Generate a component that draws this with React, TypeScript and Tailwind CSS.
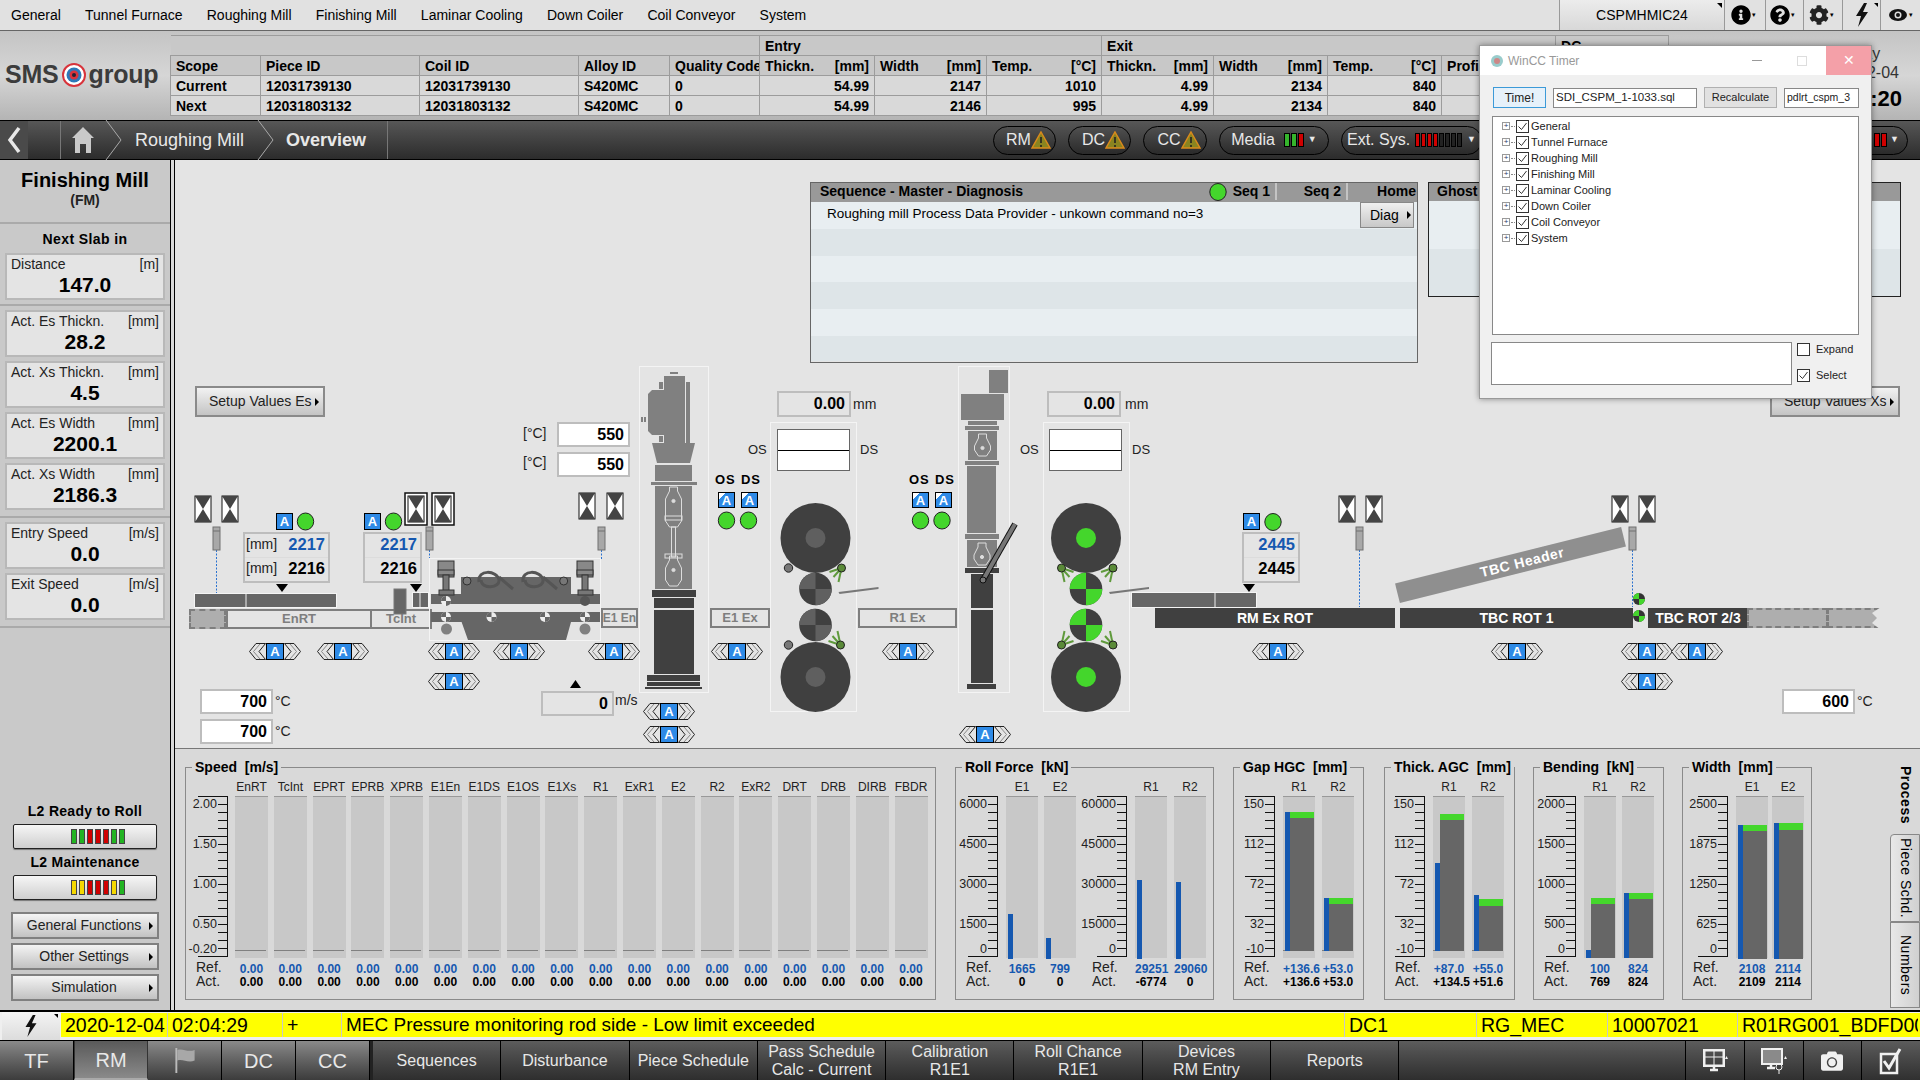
import { FaCamera, FaCog, FaInfoCircle, FaQuestionCircle } from 'react-icons/fa';

const GREEN = '#44d62c';

// ---------- small shared bits ----------

function Arrow() {
  return <span className="ml-auto h-0 w-0 border-y-[4px] border-l-[4px] border-y-transparent border-l-black" />;
}

function Bolt({ className }: { className: string }) {
  return (
    <svg viewBox="0 0 14 24" className={className}>
      <path d="M9 0 L1 13 L6 13 L3 24 L13 9 L8 9 L12 0 Z" fill="#111" />
    </svg>
  );
}

function LedStrip({ colors }: { colors: string[] }) {
  return (
    <div className="flex gap-[2px]">
      {colors.map((c, i) => (
        <span key={i} className="h-[15px] w-[6px] border border-[#444]" style={{ background: c }} />
      ))}
    </div>
  );
}

function Warn() {
  return (
    <svg viewBox="0 0 20 18" className="h-[18px] w-[20px]">
      <path d="M10 1 L19 17 L1 17 Z" fill="#8a8420" stroke="#d98a1c" strokeWidth="1.5" />
      <path d="M10 6 L10 12 M10 14 L10 16" stroke="#222" strokeWidth="1.6" />
    </svg>
  );
}

// ---------- top of the page ----------

function TopMenu() {
  const items = ['General', 'Tunnel Furnace', 'Roughing Mill', 'Finishing Mill', 'Laminar Cooling', 'Down Coiler', 'Coil Conveyor', 'System'];
  return (
    <div className="flex h-[31px] items-center border-b border-[#666] bg-[#e1e1e1] pl-[11px] text-[14px] text-black">
      <div className="flex gap-[24.2px]">
        {items.map((t) => (
          <span key={t}>{t}</span>
        ))}
      </div>
      <div className="relative ml-auto flex h-[30px] w-[166px] items-center justify-center border-x border-[#999] bg-linear-to-b from-[#ececec] to-[#d8d8d8]">
        CSPMHMIC24
        <span className="absolute right-[2px] top-[3px] h-0 w-0 border-l-[5px] border-t-[5px] border-l-transparent border-t-black" />
      </div>
      <div className="flex h-[30px] w-[195px] items-center">
        <div className="flex h-full w-[41px] items-center justify-center gap-[1px] border-r border-[#999] pr-[4px]"><FaInfoCircle className="text-[20px] text-black" /><span className="text-[7px]">▾</span></div>
        <div className="flex h-full w-[38px] items-center justify-center gap-[1px] border-r border-[#999] pr-[4px]"><FaQuestionCircle className="text-[20px] text-black" /><span className="text-[7px]">▾</span></div>
        <div className="flex h-full w-[39px] items-center justify-center gap-[1px] border-r border-[#999] pr-[4px]"><FaCog className="text-[20px] text-[#222]" /><span className="text-[7px]">▾</span></div>
        <div className="relative flex h-full w-[38px] items-center justify-center border-r border-[#999]"><Bolt className="h-[24px] w-[14px]" /><span className="absolute right-[2px] top-[3px] h-0 w-0 border-l-[4px] border-t-[4px] border-l-transparent border-t-black" /></div>
        <div className="flex h-full flex-1 items-center justify-center gap-[1px]">
          <svg viewBox="0 0 20 14" className="h-[14px] w-[20px]"><ellipse cx="10" cy="7" rx="9" ry="6" fill="#111" /><circle cx="10" cy="7" r="3.5" fill="#ddd" /><circle cx="10" cy="7" r="2" fill="#111" /></svg>
          <span className="text-[7px]">▾</span>
        </div>
      </div>
    </div>
  );
}

const cellBase = 'border border-[#9c9c9c] px-[5px] text-left font-bold';

function UnitHead({ label, unit }: { label: string; unit: string }) {
  return (
    <th className={`${cellBase} bg-[#c8c8c8]`}>
      <div className="flex justify-between">
        <span>{label}</span>
        <span>{unit}</span>
      </div>
    </th>
  );
}

function PieceRow({ scope, id, e, x }: { scope: string; id: string; e: string[]; x: string[] }) {
  return (
    <tr className="h-[20px] bg-[#d9d9d9]">
      <td className={cellBase}>{scope}</td>
      <td className={cellBase}>{id}</td>
      <td className={cellBase}>{id}</td>
      <td className={cellBase}>S420MC</td>
      <td className={cellBase}>0</td>
      {[...e, ...x].map((v, i) => (
        <td key={i} className={`${cellBase} text-right`}>{v}</td>
      ))}
      <td className={cellBase} />
      <td className={cellBase} />
    </tr>
  );
}

function HeaderBand() {
  return (
    <div className="flex h-[89px] bg-linear-to-b from-[#c4c4c4] via-[#d6d6d6] to-[#b4b4b4]">
      <div className="flex w-[170px] items-center pb-[2px] pl-[5px] text-[25px] font-bold leading-none tracking-[-0.2px] text-[#3c3c3c]">
        <span>SMS</span>
        <svg viewBox="0 0 24 24" className="mx-[3px] h-[28px] w-[24px] shrink-0">
          <circle cx="12" cy="12" r="11" fill="#fff" stroke="#d8343c" strokeWidth="2" />
          <circle cx="12" cy="12" r="7.5" fill="#2e78b8" />
          <circle cx="12" cy="12" r="4.5" fill="#d8343c" />
          <circle cx="12" cy="12" r="2" fill="#223" />
        </svg>
        <span>group</span>
      </div>
      <div className="pt-[4px]">
        <table className="w-[1498px] table-fixed border-collapse text-[14px] leading-[16px] text-black">
          <colgroup>
            <col className="w-[90px]" />
            <col className="w-[159px]" />
            <col className="w-[159px]" />
            <col className="w-[91px]" />
            <col className="w-[90px]" />
            <col className="w-[115px]" />
            <col className="w-[112px]" />
            <col className="w-[115px]" />
            <col className="w-[112px]" />
            <col className="w-[114px]" />
            <col className="w-[114px]" />
            <col className="w-[114px]" />
            <col className="w-[113px]" />
          </colgroup>
          <thead>
            <tr className="h-[20px] bg-[#c8c8c8]">
              <th colSpan={5} className="border-t border-[#9c9c9c]" />
              <th colSpan={3} className={cellBase}>Entry</th>
              <th colSpan={4} className={cellBase}>Exit</th>
              <th className={cellBase}>DC</th>
            </tr>
            <tr className="h-[20px]">
              <th className={`${cellBase} bg-[#c8c8c8]`}>Scope</th>
              <th className={`${cellBase} bg-[#c8c8c8]`}>Piece ID</th>
              <th className={`${cellBase} bg-[#c8c8c8]`}>Coil ID</th>
              <th className={`${cellBase} bg-[#c8c8c8]`}>Alloy ID</th>
              <th className={`${cellBase} overflow-hidden whitespace-nowrap bg-[#c8c8c8]`}>Quality Code</th>
              <UnitHead label="Thickn." unit="[mm]" />
              <UnitHead label="Width" unit="[mm]" />
              <UnitHead label="Temp." unit="[°C]" />
              <UnitHead label="Thickn." unit="[mm]" />
              <UnitHead label="Width" unit="[mm]" />
              <UnitHead label="Temp." unit="[°C]" />
              <th className={`${cellBase} bg-[#c8c8c8]`}>Profile</th>
              <th className={`${cellBase} bg-[#c8c8c8]`} />
            </tr>
          </thead>
          <tbody>
            <PieceRow scope="Current" id="12031739130" e={['54.99', '2147', '1010']} x={['4.99', '2134', '840']} />
            <PieceRow scope="Next" id="12031803132" e={['54.99', '2146', '995']} x={['4.99', '2134', '840']} />
          </tbody>
        </table>
      </div>
      <div className="ml-auto mr-[12px] flex w-[100px] flex-col items-center pt-[13px] text-[16px] leading-[19px] text-[#333]">
        <span>Friday</span>
        <span>2020-12-04</span>
        <span className="mt-[3px] whitespace-nowrap text-[22px] font-bold leading-[28px] text-black">02:04:20</span>
      </div>
    </div>
  );
}

function Pill({ width, label, children }: { width: string; label: string; children: React.ReactNode }) {
  return (
    <div className={`flex h-[29px] shrink-0 items-center justify-center rounded-full border border-black bg-linear-to-b from-[#505050] to-[#2a2a2a] text-[16px] text-[#e8e8e8] ${width}`}>
      {label && <span>{label}</span>}
      {children}
    </div>
  );
}

function Crumb() {
  return (
    <svg viewBox="0 0 20 40" className="h-[40px] w-[20px]">
      <path d="M2 0 L17 20 L2 40" fill="none" stroke="#aaa" strokeWidth="1" />
    </svg>
  );
}

function NavStrip() {
  const reds = (n: number, dark: number) => [...Array(n).fill('#d00000'), ...Array(dark).fill('#222')];
  return (
    <div className="flex h-[40px] items-center border-y border-black bg-linear-to-b from-[#575757] to-[#2c2c2c] text-[18px] text-[#e8e8e8]">
      <div className="flex h-full w-[28px] items-center justify-center bg-[#4a4a4a]">
        <svg viewBox="0 0 14 28" className="h-[28px] w-[14px]"><path d="M12 2 L3 14 L12 26" fill="none" stroke="#e8e8e8" strokeWidth="3.5" /></svg>
      </div>
      <div className="h-full w-[33px] border-r border-[#777]" />
      <svg viewBox="0 0 24 28" className="ml-[10px] h-[28px] w-[24px]">
        <path d="M12 1 L23 12 L20 12 L20 27 L15 27 L15 18 L9 18 L9 27 L4 27 L4 12 L1 12 Z" fill="#c9c9c9" />
      </svg>
      <div className="ml-[9px]"><Crumb /></div>
      <span className="ml-[11px] w-[112px] whitespace-nowrap pt-[1px]">Roughing Mill</span>
      <div className="ml-[9px]"><Crumb /></div>
      <span className="ml-[10px] pt-[1px] font-bold">Overview</span>
      <div className="ml-[21px] h-full border-r border-[#777]" />
      <div className="ml-auto mr-[12px] flex items-center gap-[12px]">
        <Pill width="w-[63px] pl-[8px]" label="RM"><Warn /></Pill>
        <Pill width="w-[63px] pl-[8px]" label="DC"><Warn /></Pill>
        <Pill width="w-[64px] pl-[8px]" label="CC"><Warn /></Pill>
        <Pill width="w-[110px]" label="Media">
          <div className="ml-[9px] flex gap-[1px]">
            {['#35b52c', '#35b52c', '#d00000'].map((c, i) => <span key={i} className="h-[14px] w-[6px] border border-black" style={{ background: c }} />)}
          </div>
          <span className="ml-[4px] text-[9px]">▼</span>
        </Pill>
        <Pill width="w-[141px]" label="Ext. Sys.">
          <div className="ml-[5px] flex gap-[1px]">
            {reds(4, 4).map((c, i) => <span key={i} className="h-[14px] w-[5px] border border-black" style={{ background: c }} />)}
          </div>
          <span className="ml-[5px] text-[9px]">▼</span>
        </Pill>
        <Pill width="w-[414px]" label="">
          <div className="ml-auto flex gap-[1px]">
            {reds(2, 0).map((c, i) => <span key={i} className="h-[14px] w-[6px] border border-black" style={{ background: c }} />)}
          </div>
          <span className="ml-[3px] mr-[8px] text-[9px]">▼</span>
        </Pill>
      </div>
    </div>
  );
}

// ---------- left column ----------

function ValueCard({ label, unit, value }: { label: string; unit: string; value: string }) {
  return (
    <div className="mx-[5px] flex h-[47px] flex-col border-2 border-[#b8b8b8] bg-[#e4e4e4] px-[4px] text-[14px] leading-[16px] text-[#222]">
      <div className="mt-[1px] flex justify-between">
        <span>{label}</span>
        <span>{unit}</span>
      </div>
      <div className="mt-[2px] text-center text-[21px] font-bold leading-[22px] text-black">{value}</div>
    </div>
  );
}

function SideButton({ label }: { label: string }) {
  return (
    <div className="mx-[11px] flex h-[27px] items-center border-2 border-[#808080] bg-linear-to-b from-[#f4f4f4] to-[#c2c2c2] pl-[6px] pr-[4px] text-[14px] text-[#222]">
      <span className="flex-1 text-center">{label}</span>
      <Arrow />
    </div>
  );
}

function LedButton({ colors }: { colors: string[] }) {
  return (
    <div className="mx-[13px] flex h-[25px] items-center rounded-[2px] border border-[#222] bg-linear-to-b from-[#f6f6f6] to-[#cfcfcf] pl-[57px] shadow-[0_1px_1px_#777]">
      <LedStrip colors={colors} />
    </div>
  );
}

function Sidebar() {
  const g = '#22b422';
  const r = '#d00000';
  const y = '#f5d800';
  return (
    <div className="flex w-[170px] shrink-0 flex-col bg-[#c9c9c9]">
      <div className="pt-[8px] text-center text-[20px] font-bold leading-[24px] text-black">Finishing Mill</div>
      <div className="text-center text-[14px] font-bold leading-[16px] text-[#222]">(FM)</div>
      <div className="mt-[14px] h-[2px] bg-[#aaa]" />
      <div className="mt-[7px] text-center text-[14px] font-bold leading-[16px] tracking-[0.4px] text-black">Next Slab in</div>
      <div className="mt-[6px]"><ValueCard label="Distance" unit="[m]" value="147.0" /></div>
      <div className="mt-[4px] h-[2px] bg-[#aaa]" />
      <div className="mt-[4px] flex flex-col gap-[4px]">
        <ValueCard label="Act. Es Thickn." unit="[mm]" value="28.2" />
        <ValueCard label="Act. Xs Thickn." unit="[mm]" value="4.5" />
        <ValueCard label="Act. Es Width" unit="[mm]" value="2200.1" />
        <ValueCard label="Act. Xs Width" unit="[mm]" value="2186.3" />
      </div>
      <div className="mt-[6px] h-[2px] bg-[#aaa]" />
      <div className="mt-[4px] flex flex-col gap-[4px]">
        <ValueCard label="Entry Speed" unit="[m/s]" value="0.0" />
        <ValueCard label="Exit Speed" unit="[m/s]" value="0.0" />
      </div>
      <div className="mt-[6px] h-[2px] bg-[#aaa]" />
      <div className="mt-auto pb-[9px]">
        <div className="mb-[5px] text-center text-[14px] font-bold leading-[16px] tracking-[0.3px] text-black">L2 Ready to Roll</div>
        <LedButton colors={[g, g, r, r, r, g, g]} />
        <div className="mb-[5px] mt-[5px] text-center text-[14px] font-bold leading-[16px] tracking-[0.3px] text-black">L2 Maintenance</div>
        <LedButton colors={[y, y, r, r, r, y, g]} />
        <div className="mt-[12px] flex flex-col gap-[4px]">
          <SideButton label="General Functions" />
          <SideButton label="Other Settings" />
          <SideButton label="Simulation" />
        </div>
      </div>
    </div>
  );
}

// ---------- mimic diagram drawings ----------

function Hourglass({ x, y, boxed }: { x: number; y: number; boxed?: boolean }) {
  const w = 16;
  const h = 26;
  return (
    <g>
      {boxed && <rect x={x - 3} y={y - 3} width={w + 6} height={h + 6} fill="#fff" stroke="#111" strokeWidth="1.5" />}
      <rect x={x} y={y} width={w} height={h} fill="#fff" stroke="#111" />
      <path d={`M${x} ${y} L${x + w} ${y} L${x + w / 2} ${y + h / 2} Z`} fill="#444" />
      <path d={`M${x} ${y + h} L${x + w} ${y + h} L${x + w / 2} ${y + h / 2} Z`} fill="#444" />
    </g>
  );
}

function Sensor({ x, to }: { x: number; to: number }) {
  return (
    <g>
      <line x1={x + 3.5} y1={550} x2={x + 3.5} y2={to} stroke="#2a72d0" strokeDasharray="2 1.5" />
      <rect x={x} y={527} width={7} height={23} fill="#a8a8a8" stroke="#707070" />
      <line x1={x} y1={531} x2={x + 7} y2={531} stroke="#707070" />
    </g>
  );
}

function Led({ cx, cy }: { cx: number; cy: number }) {
  return <ellipse cx={cx} cy={cy} rx={8.2} ry={8.5} fill={GREEN} stroke="#222" />;
}

function Checker({ cx, cy, r, a, b }: { cx: number; cy: number; r: number; a: string; b: string }) {
  return (
    <g>
      <circle cx={cx} cy={cy} r={r} fill={b} />
      <path d={`M${cx} ${cy} L${cx - r} ${cy} A${r} ${r} 0 0 1 ${cx} ${cy - r} Z`} fill={a} />
      <path d={`M${cx} ${cy} L${cx + r} ${cy} A${r} ${r} 0 0 1 ${cx} ${cy + r} Z`} fill={a} />
    </g>
  );
}

function Sprays({ x, y, dir, up }: { x: number; y: number; dir: number; up: number }) {
  return (
    <g stroke="#5f9a3c" strokeWidth="2">
      <line x1={x} y1={y} x2={x + dir * 12} y2={y + up * 4} />
      <line x1={x} y1={y} x2={x + dir * 8} y2={y + up * 9} />
      <line x1={x} y1={y} x2={x + dir * 3} y2={y + up * 14} />
      <circle cx={x} cy={y} r={4} fill="#5a8a38" stroke="#222" strokeWidth="1" />
    </g>
  );
}

function RollStand({ cx, frameX, on }: { cx: number; frameX: number; on: boolean }) {
  const hub = on ? GREEN : '#5f5f5f';
  const q = on ? GREEN : '#606060';
  return (
    <g>
      <rect x={frameX} y={422.5} width={86} height={289} fill="none" stroke="#f4f4f4" />
      <circle cx={cx} cy={538} r={35} fill="#404040" />
      <circle cx={cx} cy={538} r={10} fill={hub} />
      <circle cx={cx} cy={677} r={35} fill="#404040" />
      <circle cx={cx} cy={677} r={10} fill={hub} />
      <Checker cx={cx} cy={589} r={16.3} a={q} b="#404040" />
      <Checker cx={cx} cy={625} r={16.3} a={q} b="#404040" />
      {on ? (
        <>
          <Sprays x={cx - 24.5} y={568} dir={1} up={1} />
          <Sprays x={cx + 27} y={568} dir={-1} up={1} />
          <Sprays x={cx - 24.5} y={645} dir={1} up={-1} />
          <Sprays x={cx + 27} y={645} dir={-1} up={-1} />
        </>
      ) : (
        <>
          <circle cx={cx - 27} cy={568} r={4.2} fill="#777" stroke="#222" />
          <circle cx={cx - 27} cy={645} r={4.2} fill="#777" stroke="#222" />
          <Sprays x={cx + 26} y={568} dir={-1} up={1} />
          <Sprays x={cx + 25} y={645} dir={-1} up={-1} />
        </>
      )}
      <path d={`M${cx + 23} 592 L${cx + 63} 587 L${cx + 63} 589 L${cx + 24} 594 Z`} fill="#777" />
    </g>
  );
}

function Spindle({ x, y, h }: { x: number; y: number; h: number }) {
  return (
    <g fill="none" stroke="#ddd" strokeWidth="1">
      <path d={`M${x - 4} ${y} L${x + 4} ${y} L${x + 4} ${y + 4} L${x + 8} ${y + 12} L${x + 8} ${y + h - 6} L${x + 4} ${y + h} L${x - 4} ${y + h} L${x - 8} ${y + h - 6} L${x - 8} ${y + 12} L${x - 4} ${y + 4} Z`} />
      <circle cx={x} cy={y + 14} r={1.6} fill="#ddd" />
    </g>
  );
}

function MimicDrawing() {
  const g = '#808080';
  const d = '#404040';
  const frame = { fill: 'none', stroke: '#f4f4f4', strokeWidth: 1 };
  return (
    <svg viewBox="175 160 1745 588" className="absolute left-0 top-0 h-[588px] w-[1745px]">
      <Hourglass x={195} y={496} />
      <Hourglass x={222} y={496} />
      <Hourglass x={408} y={496} boxed />
      <Hourglass x={435} y={496} boxed />
      <Hourglass x={579} y={493} />
      <Hourglass x={607} y={493} />
      <Hourglass x={1339} y={496} />
      <Hourglass x={1366} y={496} />
      <Hourglass x={1612} y={496} />
      <Hourglass x={1639} y={496} />

      <Sensor x={213} to={593} />
      <Sensor x={426} to={560} />
      <Sensor x={598} to={560} />
      <Sensor x={1356} to={607} />
      <Sensor x={1629} to={607} />

      <Led cx={305.5} cy={521.5} />
      <Led cx={393.5} cy={521.5} />
      <Led cx={1273} cy={522} />
      <Led cx={726.5} cy={520.5} />
      <Led cx={748.5} cy={520.5} />
      <Led cx={920.5} cy={520.5} />
      <Led cx={942} cy={520.5} />
      <Led cx={1218} cy={192} />

      {/* pointers above the width boxes */}
      <path d="M276 584 L288 584 L282 592 Z" fill="#000" />
      <path d="M410 584 L422 584 L416 592 Z" fill="#000" />
      <path d="M1243 584 L1255 584 L1249 592 Z" fill="#000" />
      <path d="M570 688 L581 688 L575.5 680 Z" fill="#000" />

      {/* slabs */}
      <rect x={194.5} y={593.5} width={142} height={14} fill="#666" stroke="#f4f4f4" />
      <rect x={245} y={594} width={2} height={13} fill="#aaa" />
      <rect x={394} y={589} width={12} height={25} fill="#666" stroke="#777" />
      <rect x={412.5} y={592.5} width={16} height={15} fill="#666" stroke="#f4f4f4" />
      <rect x={419} y={593} width={2} height={14} fill="#aaa" />
      <rect x={1131.5} y={592.5} width={125} height={15} fill="#666" stroke="#f4f4f4" />
      <rect x={1214} y={593} width={2} height={14} fill="#aaa" />

      {/* torn end of the last roller table */}
      <path d="M1881 607 L1872 613 L1877 618 L1872 623 L1881 630 Z" fill="#e4e4e4" />

      {/* edger entry machine */}
      <rect x={429.5} y={558.5} width={171} height={82} fill="#e4e4e4" {...frame} />
      <path d="M431 594 L461 594 L461 577 L571 577 L571 594 L600 594 L600 604 L431 604 Z" fill="#666" />
      <path d="M431 612 L600 612 L600 622 L571 622 L566 640 L468 640 L461.6 622 L431 622 Z" fill="#666" />
      <path d="M479 582 C477 569 497 570 499 580 C500 588 482 590 481 580 M499 577 L513 589" fill="none" stroke="#555" strokeWidth="3" />
      <path d="M523 582 C521 569 541 570 543 580 C544 588 526 590 525 580 M543 577 L557 589" fill="none" stroke="#555" strokeWidth="3" />
      <circle cx={467} cy={581} r={4} fill="#777" stroke="#333" />
      <circle cx={563.7} cy={581} r={4} fill="#777" stroke="#333" />
      {[438, 577].map((x) => (
        <g key={x}>
          <rect x={x} y={561} width={16} height={16} fill="#888" stroke="#333" />
          <rect x={x} y={570} width={16} height={5} fill="#888" stroke="#333" />
          <rect x={x + 5} y={575} width={6} height={18} fill="#777" stroke="#333" />
          <rect x={x + 1} y={590} width={15} height={5} fill="#777" stroke="#333" />
        </g>
      ))}
      <Checker cx={446} cy={601} r={5} a="#666" b="#ededed" />
      <circle cx={585} cy={601} r={5} fill="#555" />
      <Checker cx={446} cy={617} r={5} a="#666" b="#ededed" />
      <Checker cx={491.5} cy={617} r={5} a="#666" b="#ededed" />
      <Checker cx={545} cy={617} r={5} a="#666" b="#ededed" />
      <Checker cx={585} cy={617} r={5} a="#666" b="#ededed" />
      <circle cx={446.5} cy={629} r={5.5} fill="#808080" />
      <circle cx={585} cy={629} r={5.5} fill="#808080" />

      {/* E1 stand */}
      <rect x={639.5} y={366.5} width={69} height={326} fill="#e4e4e4" {...frame} />
      <rect x={670} y={372} width={8} height={2} fill={g} />
      <rect x={664} y={376} width={21} height={67} fill={g} />
      <rect x={686} y={382} width={4} height={61} fill={g} />
      <path d="M652 390 L664 390 L664 435 L652 435 L648 431 L648 394 Z" fill={g} />
      <rect x={659} y={382} width={4} height={7} fill={g} />
      <rect x={659} y={436} width={4} height={6} fill={g} />
      <rect x={641} y={417} width={2} height={5} fill={g} />
      <rect x={644} y={417} width={2} height={5} fill={g} />
      <path d="M652 443 L695 443 L690 463 L657 463 Z" fill={g} />
      <rect x={655} y={465} width={37} height={16} fill={g} />
      <rect x={651} y={482} width={46} height={3} fill={g} />
      <rect x={655} y={486} width={37} height={103} fill={g} />
      <Spindle x={673.5} y={487} h={40} />
      <rect x={671.5} y={527} width={4} height={30} fill="none" stroke="#ddd" />
      <rect x={665} y={516} width={17} height={4} fill="none" stroke="#ddd" />
      <rect x={665} y={554} width={17} height={4} fill="none" stroke="#ddd" />
      <Spindle x={673.5} y={556} h={30} />
      <rect x={652} y={590} width={44} height={7} fill={d} />
      <rect x={654} y={598} width={40} height={10} fill={d} />
      <rect x={654} y={610} width={40} height={64} fill={d} />
      <rect x={647} y={675} width={53} height={6} fill={d} />
      <rect x={647} y={682} width={53} height={4} fill={d} />
      <rect x={645} y={687} width={57} height={2} fill={d} />

      {/* R1 stand */}
      <rect x={958.5} y={366.5} width={51} height={326} fill="#e4e4e4" {...frame} />
      <rect x={989} y={370} width={19} height={23} fill={g} />
      <rect x={961} y={394} width={43} height={26} fill={g} />
      <rect x={968} y={421} width={29} height={4} fill={g} />
      <rect x={965} y={426} width={34} height={4} fill={g} />
      <rect x={968} y={431} width={29} height={29} fill={g} />
      <Spindle x={982.5} y={434} h={22} />
      <rect x={965} y={461} width={34} height={4} fill={g} />
      <rect x={967} y={466} width={29} height={67} fill={g} />
      <rect x={965} y={534} width={34} height={5} fill={g} />
      <rect x={967} y={540} width={30} height={27} fill={g} />
      <Spindle x={982} y={543} h={22} />
      <rect x={965} y={568} width={34} height={5} fill={d} />
      <rect x={971} y={574} width={22} height={34} fill={d} />
      <rect x={971} y={610} width={22} height={73} fill={d} />
      <rect x={967} y={684} width={29} height={5} fill={d} />
      <line x1={983} y1={580} x2={1015} y2={524} stroke="#111" strokeWidth="6" />
      <line x1={983} y1={580} x2={1015} y2={524} stroke="#777" strokeWidth="4" />
      <circle cx={983} cy={580} r={3} fill="#777" stroke="#111" />

      <RollStand cx={815.5} frameX={770.5} on={false} />
      <RollStand cx={1086} frameX={1043.5} on />

      <Checker cx={1639} cy={599} r={6} a={GREEN} b="#333" />
      <Checker cx={1639} cy={616} r={6} a={GREEN} b="#333" />
    </svg>
  );
}

function AutoCtl({ pos }: { pos: string }) {
  return (
    <div className={`absolute flex h-[17px] w-[52px] items-center ${pos}`}>
      <svg viewBox="0 0 17 17" className="h-[17px] w-[17px]">
        <path d="M7 0.5 L16.5 0.5 L10 8.5 L16.5 16.5 L7 16.5 L0.5 8.5 Z" fill="#e4e4e4" stroke="#222" />
        <path d="M11 1 L4.5 8.5 L11 16" fill="none" stroke="#888" />
      </svg>
      <AutoBox size="h-[17px] w-[18px]" />
      <svg viewBox="0 0 17 17" className="h-[17px] w-[17px]">
        <path d="M10 0.5 L0.5 0.5 L7 8.5 L0.5 16.5 L10 16.5 L16.5 8.5 Z" fill="#e4e4e4" stroke="#222" />
        <path d="M6 1 L12.5 8.5 L6 16" fill="none" stroke="#888" />
      </svg>
    </div>
  );
}

function AutoBox({ size, className = '' }: { size: string; className?: string }) {
  return (
    <span className={`flex shrink-0 items-center justify-center border border-black bg-[#2e8ae6] text-[13px] font-bold leading-none text-white ${size} ${className}`}>A</span>
  );
}

function NumBox({ pos, value, plain }: { pos: string; value: string; plain?: boolean }) {
  return (
    <div className={`absolute flex items-center justify-end border-2 border-[#bdbdbd] pr-[4px] text-[16px] font-bold text-black ${plain ? 'bg-[#e4e4e4]' : 'bg-white'} ${pos}`}>{value}</div>
  );
}

function Tag({ pos, children }: { pos: string; children: React.ReactNode }) {
  return <span className={`absolute whitespace-nowrap text-[14px] leading-[16px] text-[#222] ${pos}`}>{children}</span>;
}

function Segment({ pos, label, dark }: { pos: string; label?: string; dark?: boolean }) {
  return dark ? (
    <div className={`absolute flex h-[20px] items-center justify-center whitespace-nowrap bg-[#404040] text-[14px] font-bold text-white ${pos}`}>{label}</div>
  ) : (
    <div className={`absolute flex h-[20px] items-center justify-center whitespace-nowrap border-2 border-[#7e7e7e] bg-[#e4e4e4] text-[13px] font-bold text-[#7e7e7e] ${pos}`}>{label}</div>
  );
}

function WidthBox({ pos, unit, size }: { pos: string; unit?: boolean; size: string }) {
  return (
    <div className={`absolute flex h-[51px] flex-col border-2 border-[#bdbdbd] bg-[#e4e4e4] leading-[16px] ${size} ${pos}`}>
      {[['2217', 'text-[#1558b0]'], ['2216', 'text-black']].map(([v, c], i) => (
        <div key={i} className={`flex h-[23.5px] items-center justify-end pb-[3px] pr-[3px] ${i === 0 ? 'border-b border-[#dcdcdc]' : ''}`}>
          {unit && <span className="mr-auto pl-[1px] text-[14px] text-[#222]">[mm]</span>}
          <span className={`text-[16.5px] font-bold ${c}`}>{v}</span>
        </div>
      ))}
    </div>
  );
}

function GapGauge({ pos }: { pos: string }) {
  return (
    <div className={`absolute flex h-[42px] w-[73px] flex-col border border-[#666] bg-white ${pos}`}>
      <div className="flex-1 border-b border-black" />
      <div className="flex-1" />
    </div>
  );
}

function DiagPanels() {
  const rows = ['bg-[#e8eef1]', 'bg-[#dee5e8]', 'bg-[#e8eef1]', 'bg-[#dee5e8]', 'bg-[#e8eef1]', 'bg-[#dee5e8]'];
  return (
    <div className="flex gap-[10px] pl-[635px] pt-[22px] text-black">
      <div className="h-[181px] w-[608px] border border-[#666]">
        <div className="flex h-[19px] items-center bg-[#999] pb-[2px] text-[14px] font-bold">
          <span className="ml-[9px]">Sequence - Master - Diagnosis</span>
          <span className="ml-auto mr-[5px]">Seq 1</span>
          <span className="flex h-full w-[71px] items-center justify-end border-l-2 border-[#c4c4c4] pr-[5px]">Seq 2</span>
          <span className="flex h-full w-[71px] items-center justify-end border-l-2 border-[#c4c4c4] pr-[1px]">Home</span>
        </div>
        {rows.map((bg, i) => (
          <div key={i} className={`flex h-[26.8px] items-center last:h-[25px] ${bg}`}>
            {i === 0 && (
              <>
                <span className="mb-[2px] ml-[16px] text-[13.5px]">Roughing mill Process Data Provider - unkown command no=3</span>
                <span className="ml-auto mr-[3px] flex h-[26px] w-[54px] items-center border border-[#888] bg-linear-to-b from-[#f0f0f0] to-[#c8c8c8] pl-[9px] pr-[2px] text-[14px]">Diag<Arrow /></span>
              </>
            )}
          </div>
        ))}
      </div>
      <div className="h-[115px] w-[473px] border border-[#222]">
        <div className="flex h-[18px] items-center bg-[#999] pb-[2px] pl-[8px] text-[14px] font-bold">Ghost</div>
        <div className="h-[48px] bg-[#e8eef1]" />
        <div className="h-[47px] bg-[#dee5e8]" />
      </div>
    </div>
  );
}

function Mimic() {
  return (
    <div className="relative h-[588px] bg-[#e4e4e4]">
      <DiagPanels />

      <Segment pos="left-[14px] top-[449px] w-[37px] !border-dashed !bg-[#aeaeae]" />
      <Segment pos="left-[51px] top-[449px] w-[146px]" label="EnRT" />
      <Segment pos="left-[195px] top-[449px] w-[62px]" label="TcInt" />
      <Segment pos="left-[426px] top-[448px] w-[37px] !text-[12px]" label="E1 En" />
      <Segment pos="left-[535px] top-[448px] w-[60px]" label="E1 Ex" />
      <Segment pos="left-[683px] top-[448px] w-[99px]" label="R1 Ex" />
      <Segment dark pos="left-[980px] top-[448px] w-[240px]" label="RM Ex ROT" />
      <Segment dark pos="left-[1225px] top-[448px] w-[233px]" label="TBC ROT 1" />
      <Segment dark pos="left-[1473px] top-[448px] w-[100px]" label="TBC ROT 2/3" />
      <Segment pos="left-[1572px] top-[448px] w-[81px] !border-dashed !bg-[#aeaeae]" />
      <Segment pos="left-[1652px] top-[448px] w-[53px] !border-dashed !bg-[#aeaeae]" />

      <MimicDrawing />

      <div className="absolute left-[1219px] top-[395px] flex h-[20px] w-[233px] -rotate-[14deg] items-center justify-center bg-[#8f8f8f] pl-[24px] text-[14px] font-bold tracking-[0.6px] text-white">TBC Header</div>

      <div className="absolute left-[20px] top-[226px] flex h-[31px] w-[130px] items-center border-2 border-[#8a8a8a] bg-linear-to-b from-[#f2f2f2] to-[#c4c4c4] pl-[12px] pr-[4px] text-[14px] text-[#222]">Setup Values Es<Arrow /></div>
      <div className="absolute left-[1595px] top-[226px] flex h-[31px] w-[130px] items-center border-2 border-[#8a8a8a] bg-linear-to-b from-[#f2f2f2] to-[#c4c4c4] pl-[12px] pr-[4px] text-[14px] text-[#222]">Setup Values Xs<Arrow /></div>

      <AutoBox size="h-[17px] w-[17px]" className="absolute left-[101px] top-[353px]" />
      <AutoBox size="h-[17px] w-[17px]" className="absolute left-[189px] top-[353px]" />
      <AutoBox size="h-[17px] w-[17px]" className="absolute left-[1068px] top-[353px]" />
      <AutoBox size="h-[16px] w-[17px]" className="absolute left-[543px] top-[332px] bg-[linear-gradient(135deg,#fff_22%,#2e8ae6_22%)]" />
      <AutoBox size="h-[16px] w-[17px]" className="absolute left-[566px] top-[332px] bg-[linear-gradient(135deg,#fff_22%,#2e8ae6_22%)]" />
      <AutoBox size="h-[16px] w-[17px]" className="absolute left-[737px] top-[332px] bg-[linear-gradient(135deg,#fff_22%,#2e8ae6_22%)]" />
      <AutoBox size="h-[16px] w-[17px]" className="absolute left-[760px] top-[332px] bg-[linear-gradient(135deg,#fff_22%,#2e8ae6_22%)]" />

      <span className="absolute left-[540px] top-[312px] text-[13px] font-bold leading-[16px] tracking-[0.8px]">OS</span>
      <span className="absolute left-[566px] top-[312px] text-[13px] font-bold leading-[16px] tracking-[0.8px]">DS</span>
      <span className="absolute left-[734px] top-[312px] text-[13px] font-bold leading-[16px] tracking-[0.8px]">OS</span>
      <span className="absolute left-[760px] top-[312px] text-[13px] font-bold leading-[16px] tracking-[0.8px]">DS</span>

      <WidthBox pos="left-[68px] top-[372px]" size="w-[87px]" unit />
      <WidthBox pos="left-[188px] top-[372px]" size="w-[59px]" />
      <div className="absolute left-[1067px] top-[372px] flex h-[51px] w-[58px] flex-col border-2 border-[#bdbdbd] bg-[#e4e4e4] text-[16.5px] font-bold leading-[16px]">
        <div className="flex h-[23.5px] items-center justify-end border-b border-[#dcdcdc] pb-[3px] pr-[3px] text-[#1558b0]">2445</div>
        <div className="flex h-[23.5px] items-center justify-end pb-[3px] pr-[3px] text-black">2445</div>
      </div>

      <NumBox pos="left-[382px] top-[262px] h-[25px] w-[73px]" value="550" />
      <NumBox pos="left-[382px] top-[292px] h-[25px] w-[73px]" value="550" />
      <Tag pos="left-[348px] top-[265px]">[°C]</Tag>
      <Tag pos="left-[348px] top-[294px]">[°C]</Tag>
      <NumBox pos="left-[25px] top-[529px] h-[25px] w-[73px]" value="700" />
      <NumBox pos="left-[25px] top-[559px] h-[25px] w-[73px]" value="700" />
      <Tag pos="left-[100px] top-[533px]">°C</Tag>
      <Tag pos="left-[100px] top-[563px]">°C</Tag>
      <NumBox pos="left-[1607px] top-[529px] h-[25px] w-[73px]" value="600" />
      <Tag pos="left-[1682px] top-[533px]">°C</Tag>
      <NumBox plain pos="left-[366px] top-[531px] h-[25px] w-[73px]" value="0" />
      <Tag pos="left-[440px] top-[532px]">m/s</Tag>
      <NumBox plain pos="left-[602px] top-[231px] h-[26px] w-[74px]" value="0.00" />
      <Tag pos="left-[678px] top-[236px]">mm</Tag>
      <NumBox plain pos="left-[872px] top-[231px] h-[26px] w-[74px]" value="0.00" />
      <Tag pos="left-[950px] top-[236px]">mm</Tag>

      <GapGauge pos="left-[602px] top-[269px]" />
      <GapGauge pos="left-[874px] top-[269px]" />
      <span className="absolute left-[573px] top-[282px] text-[13px] leading-[16px] text-[#222]">OS</span>
      <span className="absolute left-[685px] top-[282px] text-[13px] leading-[16px] text-[#222]">DS</span>
      <span className="absolute left-[845px] top-[282px] text-[13px] leading-[16px] text-[#222]">OS</span>
      <span className="absolute left-[957px] top-[282px] text-[13px] leading-[16px] text-[#222]">DS</span>

      <AutoCtl pos="left-[74px] top-[483px]" />
      <AutoCtl pos="left-[142px] top-[483px]" />
      <AutoCtl pos="left-[253px] top-[483px]" />
      <AutoCtl pos="left-[318px] top-[483px]" />
      <AutoCtl pos="left-[413px] top-[483px]" />
      <AutoCtl pos="left-[536px] top-[483px]" />
      <AutoCtl pos="left-[707px] top-[483px]" />
      <AutoCtl pos="left-[1077px] top-[483px]" />
      <AutoCtl pos="left-[1316px] top-[483px]" />
      <AutoCtl pos="left-[1446px] top-[483px]" />
      <AutoCtl pos="left-[1496px] top-[483px]" />
      <AutoCtl pos="left-[253px] top-[513px]" />
      <AutoCtl pos="left-[1446px] top-[513px]" />
      <AutoCtl pos="left-[468px] top-[543px]" />
      <AutoCtl pos="left-[468px] top-[566px]" />
      <AutoCtl pos="left-[784px] top-[566px]" />
    </div>
  );
}

// ---------- bar charts ----------

function Ruler({ width, labels, className = '', labelClass = '' }: { width: number; labels: string[]; className?: string; labelClass?: string }) {
  const ticks = Array.from({ length: 21 }, (_, i) => i);
  return (
    <div className={`shrink-0 ${className}`} style={{ width }}>
      <div className="relative mt-[28px] h-[161px]">
        <svg className="absolute inset-0 h-full w-full">
          <line x1={width - 0.5} y1={0} x2={width - 0.5} y2={161} stroke="#111" />
          {ticks.map((i) => (
            <line key={i} x1={width - (i % 5 === 0 ? 30 : 10)} y1={i * 8 + 0.5} x2={width} y2={i * 8 + 0.5} stroke="#111" />
          ))}
        </svg>
        <div className={`flex flex-col items-end pr-[11px] text-[12.5px] leading-[16px] text-[#222] ${labelClass}`}>
          {labels.map((l, i) => (
            <div key={l} className={i === 3 ? 'h-[25px]' : i === 4 ? 'h-[16px]' : 'h-[40px]'}>{l}</div>
          ))}
        </div>
      </div>
      <div className="mt-[3px] pl-[10px] text-[14px] leading-[14px] text-[#222]">
        <div>Ref.</div>
        <div>Act.</div>
      </div>
    </div>
  );
}

type Fill = { blue: number; green?: number; greenEnd?: number; bottom: number };

// y values of the fill are page rows, the track starts at row 795
function BarCol({ label, refv, act, fill, base, className = '', width = 'w-[32px]' }: { label: string; refv: string; act: string; fill?: Fill; base?: boolean; className?: string; width?: string }) {
  return (
    <div className={`shrink-0 ${width} ${className}`}>
      <div className="h-[28px] whitespace-nowrap pt-[12px] text-center text-[12px] leading-[14px] text-[#222]">{label}</div>
      <div className="relative h-[162px] border-t border-[#999] bg-[#c8c8c8]">
        {base && <div className="absolute bottom-[7px] left-0 right-[2px] h-[1px] bg-[#808080]" />}
        {fill && (
          <>
            <div className="absolute left-[2px] w-[4.5px] bg-[#1558b0]" style={{ top: fill.blue - 795, height: fill.bottom - fill.blue }} />
            {fill.green !== undefined && fill.greenEnd !== undefined && (
              <>
                <div className="absolute left-[7px] w-[24px] bg-[#44d62c]" style={{ top: fill.green - 795, height: fill.greenEnd - fill.green }} />
                <div className="absolute left-[7px] w-[24px] bg-[#666]" style={{ top: fill.greenEnd - 795, height: fill.bottom - fill.greenEnd }} />
              </>
            )}
          </>
        )}
      </div>
      <div className="mt-[5px] whitespace-nowrap text-center text-[12px] font-bold leading-[13px]">
        <div className="text-[#1558b0]">{refv}</div>
        <div className="text-black">{act}</div>
      </div>
    </div>
  );
}

function GroupBox({ title, width, className = '', children }: { title: string; width: string; className?: string; children: React.ReactNode }) {
  return (
    <div className={`relative h-[233px] shrink-0 border border-[#8a8a8a] ${width} ${className}`}>
      <span className="absolute -top-[9px] left-[6px] whitespace-pre bg-[#d9d9d9] px-[3px] text-[14px] font-bold leading-[16px] text-black">{title}</span>
      <div className="flex">{children}</div>
    </div>
  );
}

function ProcessTabs() {
  return (
    <div className="-mt-[18px] ml-auto flex h-[261px] w-[30px] pt-[17px] text-[14px] [writing-mode:vertical-rl]">
      <div className="flex h-[68px] w-[30px] items-center justify-start font-bold tracking-[0.5px]">Process</div>
      <div className="flex h-[88px] w-[30px] items-center justify-center rounded-tl-[4px] border border-[#888] bg-linear-to-r from-[#e8e8e8] to-[#d0d0d0] tracking-[0.5px]">Piece Schd.</div>
      <div className="flex h-[86px] w-[30px] items-center justify-center border border-[#888] bg-linear-to-r from-[#e8e8e8] to-[#d0d0d0] tracking-[0.5px]">Numbers</div>
    </div>
  );
}

function Charts() {
  const speed = ['EnRT', 'TcInt', 'EPRT', 'EPRB', 'XPRB', 'E1En', 'E1DS', 'E1OS', 'E1Xs', 'R1', 'ExR1', 'E2', 'R2', 'ExR2', 'DRT', 'DRB', 'DIRB', 'FBDR'];
  const sp = ['2.00', '1.50', '1.00', '0.50', '-0.20'];
  const gap = ['150', '112', '72', '32', '-10'];
  return (
    <div className="flex h-[262px] border-t border-[#777] bg-[#d9d9d9] pl-[10px] pt-[18px]">
      <GroupBox title="Speed  [m/s]" width="w-[751px]">
        <Ruler width={42} labels={sp} />
        <div className="ml-[7px] flex gap-[5.8px]">
          {speed.map((s) => <BarCol key={s} label={s} refv="0.00" act="0.00" base width="w-[33px]" />)}
        </div>
      </GroupBox>
      <GroupBox title="Roll Force  [kN]" width="w-[259px]" className="ml-[19px]">
        <Ruler width={42} labels={['6000', '4500', '3000', '1500', '0']} />
        <BarCol className="ml-[8px]" label="E1" refv="1665" act="0" fill={{ blue: 912, bottom: 957 }} />
        <BarCol className="ml-[6px]" label="E2" refv="799" act="0" fill={{ blue: 936, bottom: 957 }} />
        <Ruler className="ml-[6px]" width={45} labels={['60000', '45000', '30000', '15000', '0']} />
        <BarCol className="ml-[8px]" label="R1" refv="29251" act="-6774" fill={{ blue: 878, bottom: 957 }} />
        <BarCol className="ml-[7px]" label="R2" refv="29060" act="0" fill={{ blue: 880, bottom: 957 }} />
      </GroupBox>
      <GroupBox title="Gap HGC  [mm]" width="w-[131px]" className="ml-[19px]">
        <Ruler width={41} labels={gap} />
        <BarCol className="ml-[8px]" label="R1" refv="+136.6" act="+136.6" base fill={{ blue: 810, green: 810, greenEnd: 816, bottom: 949 }} />
        <BarCol className="ml-[7px]" label="R2" refv="+53.0" act="+53.0" base fill={{ blue: 896, green: 896, greenEnd: 902, bottom: 949 }} />
      </GroupBox>
      <GroupBox title="Thick. AGC  [mm]" width="w-[131px]" className="ml-[20px]">
        <Ruler width={40} labels={gap} />
        <BarCol className="ml-[8px]" label="R1" refv="+87.0" act="+134.5" base fill={{ blue: 861, green: 812, greenEnd: 818, bottom: 949 }} />
        <BarCol className="ml-[7px]" label="R2" refv="+55.0" act="+51.6" base fill={{ blue: 893, green: 897, greenEnd: 904, bottom: 949 }} />
      </GroupBox>
      <GroupBox title="Bending  [kN]" width="w-[131px]" className="ml-[18px]">
        <Ruler width={42} labels={['2000', '1500', '1000', '500', '0']} />
        <BarCol className="ml-[8px]" label="R1" refv="100" act="769" fill={{ blue: 948, green: 896, greenEnd: 902, bottom: 956 }} />
        <BarCol className="ml-[6px]" label="R2" refv="824" act="824" fill={{ blue: 891, green: 891, greenEnd: 897, bottom: 956 }} />
      </GroupBox>
      <GroupBox title="Width  [mm]" width="w-[130px]" className="ml-[18px]">
        <Ruler width={45} labels={['2500', '1875', '1250', '625', '0']} />
        <BarCol className="ml-[8px]" label="E1" refv="2108" act="2109" fill={{ blue: 823, green: 823, greenEnd: 829, bottom: 957 }} />
        <BarCol className="ml-[4px]" label="E2" refv="2114" act="2114" fill={{ blue: 821, green: 821, greenEnd: 828, bottom: 957 }} />
      </GroupBox>
      <ProcessTabs />
    </div>
  );
}

// ---------- alarm line and bottom navigation ----------

function AlarmLine() {
  const cells: [string, string][] = [
    ['w-[106px]', '2020-12-04'],
    ['w-[115px]', '02:04:29'],
    ['w-[59px]', '+'],
    ['w-[1003px] text-[19px]', 'MEC Pressure monitoring rod side - Low limit exceeded'],
    ['w-[132px]', 'DC1'],
    ['w-[131px]', 'RG_MEC'],
    ['w-[130px]', '10007021'],
    ['w-[181px]', 'R01RG001_BDFD001'],
  ];
  return (
    <div className="flex h-[30px] border-t-2 border-black bg-[#efefef]">
      <div className="relative ml-[2px] flex h-[28px] w-[58px] items-center justify-center bg-linear-to-b from-[#f4f4f4] to-[#dcdcdc]">
        <Bolt className="h-[22px] w-[14px]" />
        <span className="absolute right-[2px] top-[2px] h-0 w-0 border-l-[4px] border-t-[4px] border-l-transparent border-t-black" />
      </div>
      <div className="ml-[1px] mt-[1px] flex h-[24px] flex-1 overflow-hidden bg-[#ffff00] text-[19.5px] leading-[24px] text-black">
        {cells.map(([w, t], i) => (
          <div key={t} className={`shrink-0 overflow-hidden whitespace-nowrap pl-[4px] ${w} ${i ? 'border-l border-[#c8c8c8]' : ''}`}>{t}</div>
        ))}
      </div>
    </div>
  );
}

const areaBtn = 'flex h-full w-[74px] items-center justify-center border-r border-black bg-linear-to-b from-[#8a8a8a] to-[#3c3c3c] text-[20px] text-[#e8e8e8]';
const navBtn = 'flex h-full w-[128.3px] items-center justify-center border-r border-black text-center text-[16px] leading-[18px] text-[#e8e8e8]';

function NavIcon({ children }: { children: React.ReactNode }) {
  return <div className="flex h-full w-[58.7px] items-center justify-center border-l border-black bg-linear-to-b from-[#5c5c5c] to-[#303030]">{children}</div>;
}

function BottomBar() {
  const nav = ['Sequences', 'Disturbance', 'Piece Schedule', 'Pass Schedule\nCalc - Current', 'Calibration\nR1E1', 'Roll Chance\nR1E1', 'Devices\nRM Entry', 'Reports'];
  return (
    <div className="flex h-[40px] border-t border-black bg-linear-to-b from-[#5c5c5c] to-[#2e2e2e]">
      <div className={areaBtn}>TF</div>
      <div className="flex h-full w-[74px] items-center justify-center border-x border-b-2 border-[#333] border-b-[#aaa] bg-linear-to-b from-[#5a5a5a] to-[#8a8a8a] text-[20px] text-[#e8e8e8]">RM</div>
      <div className={areaBtn}>
        <svg viewBox="0 0 22 26" className="h-[25px] w-[22px]"><path d="M2 0 L2 26" stroke="#bbb" strokeWidth="2" /><path d="M3 2 C9 0 14 5 21 2 L21 13 C14 16 9 11 3 13 Z" fill="#a8a8a8" /></svg>
      </div>
      <div className={areaBtn}>DC</div>
      <div className={areaBtn}>CC</div>
      <div className="w-[3px] bg-[#222]" />
      {nav.map((n) => (
        <div key={n} className={`${navBtn} whitespace-pre-line`}>{n}</div>
      ))}
      <div className="ml-auto flex h-full">
        <NavIcon>
          <svg viewBox="0 0 26 26" className="h-[26px] w-[26px]"><path d="M2 2 H22 V18 H2 Z" fill="none" stroke="#f0f0f0" strokeWidth="2" /><path d="M3 3 H21 V17 H3 Z M12 3 V17 M3 9 H21" fill="none" stroke="#f0f0f0" /><path d="M8 22 H16 M12 18 V22" stroke="#f0f0f0" strokeWidth="2.5" /><path d="M23 11 L26 11 L24.5 8 Z" fill="#f0f0f0" /></svg>
        </NavIcon>
        <NavIcon>
          <svg viewBox="0 0 28 28" className="h-[28px] w-[28px]"><path d="M2 2 H22 V17 H2 Z" fill="#8a8a8a" stroke="#f0f0f0" strokeWidth="2" /><path d="M7 21 H15 M11 17 V21" stroke="#f0f0f0" strokeWidth="2.5" /><circle cx="19" cy="20" r="3" fill="none" stroke="#f0f0f0" /><path d="M19 23 V27" stroke="#f0f0f0" /><path d="M24 12 L27 12 L25.5 9 Z" fill="#f0f0f0" /></svg>
        </NavIcon>
        <NavIcon><FaCamera className="text-[22px] text-[#f0f0f0]" /></NavIcon>
        <NavIcon>
          <svg viewBox="0 0 24 28" className="h-[28px] w-[24px]"><path d="M2 7 H18 V26 H2 Z" fill="none" stroke="#f0f0f0" strokeWidth="2.5" /><path d="M5 14 L10 21 L21 2" fill="none" stroke="#f0f0f0" strokeWidth="3" /></svg>
        </NavIcon>
      </div>
    </div>
  );
}

// ---------- floating WinCC window ----------

function Check({ on = true }: { on?: boolean }) {
  return (
    <span className="flex h-[13px] w-[13px] shrink-0 items-center justify-center border border-[#333] bg-white">
      {on && <svg viewBox="0 0 11 11" className="h-[11px] w-[11px]"><path d="M1.5 5.5 L4.5 8.5 L9.5 2" fill="none" stroke="#333" strokeWidth="1" /></svg>}
    </span>
  );
}

function TimerWindow() {
  const tree = ['General', 'Tunnel Furnace', 'Roughing Mill', 'Finishing Mill', 'Laminar Cooling', 'Down Coiler', 'Coil Conveyor', 'System'];
  return (
    <div className="absolute left-[1479px] top-[45px] flex h-[354px] w-[393px] flex-col border border-[#999] bg-[#f0f0f0] text-[11px] text-[#222] shadow-[0_0_6px_rgba(0,0,0,0.4)]">
      <div className="flex h-[29px] items-center bg-white pl-[10px] text-[12px] text-[#999]">
        <svg viewBox="0 0 14 14" className="mr-[4px] h-[14px] w-[14px]"><circle cx="7" cy="7" r="6" fill="#9cc" /><circle cx="7" cy="7" r="3" fill="#c88" /></svg>
        <span>WinCC Timer</span>
        <span className="ml-auto mr-[35px] h-[1px] w-[10px] bg-[#999]" />
        <span className="mr-[19px] h-[10px] w-[10px] border border-[#ddd]" />
        <span className="flex h-full w-[45px] items-center justify-center bg-[#f4a0a8] text-[14px] text-white">✕</span>
      </div>
      <div className="mt-[12px] flex h-[21px] items-center pl-[13px]">
        <span className="flex h-[21px] w-[53px] items-center justify-center border border-[#3c9ad8] bg-[#e6f1fa] text-[12px]">Time!</span>
        <span className="ml-[7px] flex h-[20px] w-[144px] items-center border border-[#888] bg-white pl-[2px] text-[11.5px]">SDI_CSPM_1-1033.sql</span>
        <span className="ml-[7px] flex h-[21px] w-[73px] items-center justify-center border border-[#b0b0b0] bg-[#e1e1e1]">Recalculate</span>
        <span className="ml-[7px] flex h-[20px] w-[75px] items-center border border-[#888] bg-white pl-[2px] text-[10.5px]">pdlrt_cspm_3</span>
      </div>
      <div className="mx-[12px] mt-[8px] h-[219px] border border-[#888] bg-white pl-[9px] pt-[1px]">
        {tree.map((t) => (
          <div key={t} className="flex h-[16px] items-center">
            <span className="flex h-[8px] w-[8px] items-center justify-center border border-[#999] text-[8px] leading-none text-[#336]">+</span>
            <span className="mx-[1px] w-[4px] border-t border-dotted border-[#888]" />
            <Check />
            <span className="ml-[2px] whitespace-nowrap">{t}</span>
          </div>
        ))}
      </div>
      <div className="ml-[11px] mt-[7px] flex">
        <div className="h-[43px] w-[301px] border border-[#888] bg-white" />
        <div className="ml-[5px] flex flex-col gap-[13px] pt-[1px] leading-[13px]">
          <div className="flex items-center gap-[6px]"><Check on={false} />Expand</div>
          <div className="flex items-center gap-[6px]"><Check />Select</div>
        </div>
      </div>
    </div>
  );
}

export default function App() {
  return (
    <div className="relative flex h-[1080px] w-[1920px] flex-col overflow-hidden font-['Liberation_Sans',Arial,sans-serif]">
      <TopMenu />
      <HeaderBand />
      <NavStrip />
      <div className="flex h-[850px]">
        <Sidebar />
        <div className="w-[5px] shrink-0 border-x border-black bg-[#d9d9d9]" />
        <div className="flex min-w-0 flex-1 flex-col">
          <Mimic />
          <Charts />
        </div>
      </div>
      <AlarmLine />
      <BottomBar />
      <TimerWindow />
    </div>
  );
}
